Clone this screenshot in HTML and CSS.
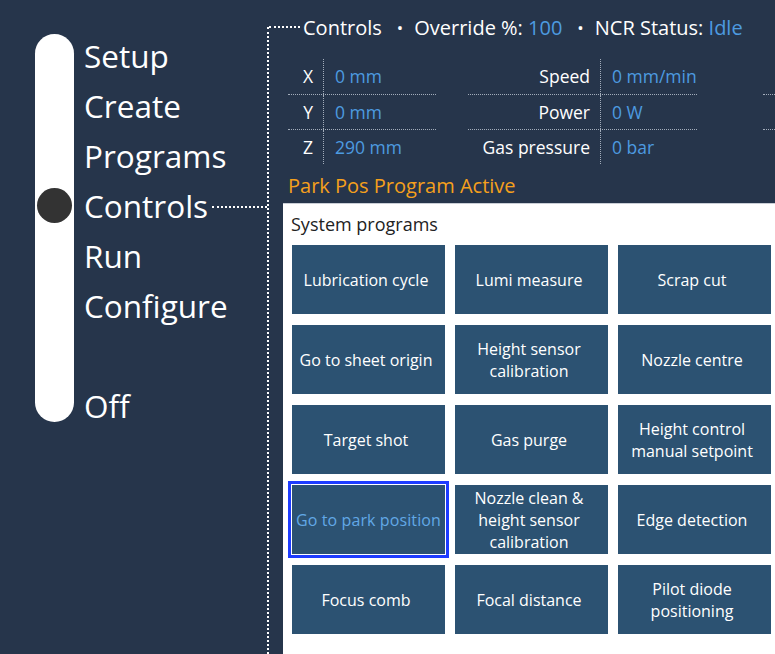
FILE: index.html
```html
<!DOCTYPE html>
<html>
<head>
<meta charset="utf-8">
<link rel="stylesheet" href="styles.css">
</head>
<body>
<div class="page">
  <nav class="nav">
    <div class="pill"></div>
    <div class="knob"></div>
    <div class="item r1">Setup</div>
    <div class="item r2">Create</div>
    <div class="item r3">Programs</div>
    <div class="item r4 active"><span>Controls</span></div>
    <div class="item r5">Run</div>
    <div class="item r6">Configure</div>
    <div class="item r8">Off</div>
  </nav>
  <main class="main">
    <div class="header">
      <span>Controls</span>
      <span class="dot">•</span>
      <span>Override %: <b class="val">100</b></span>
      <span class="dot">•</span>
      <span>NCR Status: <b class="val">Idle</b></span>
    </div>
    <div class="stats">
      <div class="tbl t1">
        <div class="row"><div class="lab">X</div><div class="v">0 mm</div></div>
        <div class="row"><div class="lab">Y</div><div class="v">0 mm</div></div>
        <div class="row"><div class="lab">Z</div><div class="v">290 mm</div></div>
      </div>
      <div class="tbl t2">
        <div class="row"><div class="lab">Speed</div><div class="v">0 mm/min</div></div>
        <div class="row"><div class="lab">Power</div><div class="v">0 W</div></div>
        <div class="row"><div class="lab">Gas pressure</div><div class="v">0 bar</div></div>
      </div>
      <div class="tbl t3">
        <div class="row"><div class="lab"></div><div class="v"></div></div>
        <div class="row"><div class="lab"></div><div class="v"></div></div>
        <div class="row"><div class="lab"></div><div class="v"></div></div>
      </div>
    </div>
    <div class="notice">Park Pos Program Active</div>
    <section class="panel">
      <div class="title">System programs</div>
      <div class="grid">
        <button class="btn">Lubrication cycle</button>
        <button class="btn">Lumi measure</button>
        <button class="btn">Scrap cut</button>
        <button class="btn">Go to sheet origin</button>
        <button class="btn">Height sensor calibration</button>
        <button class="btn">Nozzle centre</button>
        <button class="btn">Target shot</button>
        <button class="btn">Gas purge</button>
        <button class="btn">Height control manual setpoint</button>
        <button class="btn selected">Go to park position</button>
        <button class="btn">Nozzle clean &amp; height sensor calibration</button>
        <button class="btn">Edge detection</button>
        <button class="btn">Focus comb</button>
        <button class="btn">Focal distance</button>
        <button class="btn">Pilot diode positioning</button>
      </div>
    </section>
  </main>
</div>
</body>
</html>
```

FILE: styles.css
```css
* { box-sizing: border-box; }
html, body { margin: 0; padding: 0; }
body {
  background: #26354b;
  font-family: "Open Sans", "Noto Sans", sans-serif;
  color: #fff;
  width: 775px;
  height: 654px;
  overflow: hidden;
}
.page {
  display: flex;
  height: 654px;
  overflow: hidden;
}
.nav {
  width: 267px;
  flex: none;
  display: grid;
  grid-template-columns: 39px 1fr;
  grid-template-rows: repeat(8, 50px);
  column-gap: 10px;
  padding: 31px 0 0 35px;
  align-content: start;
}
.pill {
  grid-column: 1;
  grid-row: 1 / 9;
  margin: 3px 0 9px;
  background: #fff;
  border-radius: 20px;
}
.knob {
  grid-column: 1;
  grid-row: 4;
  align-self: center;
  justify-self: center;
  width: 35px;
  height: 35px;
  margin-top: -1px;
  border-radius: 50%;
  background: #333333;
}
.item {
  grid-column: 2;
  font-size: 31.5px;
  line-height: 50px;
  white-space: nowrap;
}
.r1 { grid-row: 1; }
.r2 { grid-row: 2; }
.r3 { grid-row: 3; }
.r4 { grid-row: 4; }
.r5 { grid-row: 5; }
.r6 { grid-row: 6; }
.r8 { grid-row: 8; }
.active {
  display: flex;
  align-items: center;
}
.active::after {
  content: "";
  flex: 1;
  height: 0;
  border-top: 2px dotted #fff;
  margin-left: 4px;
  margin-top: 2px;
}
.main {
  flex: 1;
  display: flex;
  flex-direction: column;
  margin-top: 27px;
  border-left: 2px dotted #fff;
  min-width: 0;
}
.header {
  display: flex;
  align-items: center;
  margin-top: -14px;
  height: 28px;
  font-size: 20px;
  white-space: nowrap;
}
.header::before {
  content: "";
  width: 31px;
  height: 0;
  border-top: 2px dotted #fff;
  margin-right: 3px;
}
.header b { font-weight: normal; }
.val { color: #4d9be0; }
.dot { margin: 0 11px 0 15px; font-size: 17px; }
.stats {
  display: flex;
  margin-top: 18px;
  padding-left: 19px;
  font-size: 17.5px;
  white-space: nowrap;
}
.tbl { flex: none; }
.t1 { width: 148px; margin-right: 32px; }
.t2 { width: 229px; margin-right: 66px; }
.t3 { width: 60px; }
.t1 .lab { width: 35px; }
.t2 .lab { width: 132px; }
.t3 .lab { width: 0; }
.row {
  display: flex;
  height: 35px;
  align-items: stretch;
}
.row + .row { border-top: 1px dotted #a3adbb; }
.lab {
  flex: none;
  text-align: right;
  padding-right: 10px;
  line-height: 34px;
}
.v {
  flex: 1;
  border-left: 1px dotted #a3adbb;
  padding-left: 11px;
  line-height: 34px;
  color: #4d9be0;
}
.t3 .v { border-left: none; }
.notice {
  color: #f5a01c;
  font-size: 20px;
  line-height: 28px;
  margin-top: 8px;
  padding-left: 19px;
}
.panel {
  flex: 1;
  margin: 3px 0 0 14px;
  background: #fff;
  border-top: 1px solid #c9ced6;
  padding: 8px 0 0 8px;
}
.title {
  color: #222;
  font-size: 18px;
  line-height: 24px;
}
.grid {
  display: grid;
  grid-template-columns: repeat(3, 153px);
  grid-auto-rows: 69px;
  column-gap: 10px;
  row-gap: 11px;
  margin: 9px 0 0 1px;
}
.btn {
  border: none;
  background: #2c5272;
  color: #fff;
  font-family: "Open Sans", "Noto Sans", sans-serif;
  font-size: 16px;
  line-height: 22px;
  padding: 1px 5px 0 0;
  text-align: center;
}
.btn.selected {
  color: #62a8e6;
  letter-spacing: 0.1px;
  white-space: nowrap;
  padding: 1px 0 0 0;
  outline: 3px solid #1e3cff;
  outline-offset: 1px;
}
```
